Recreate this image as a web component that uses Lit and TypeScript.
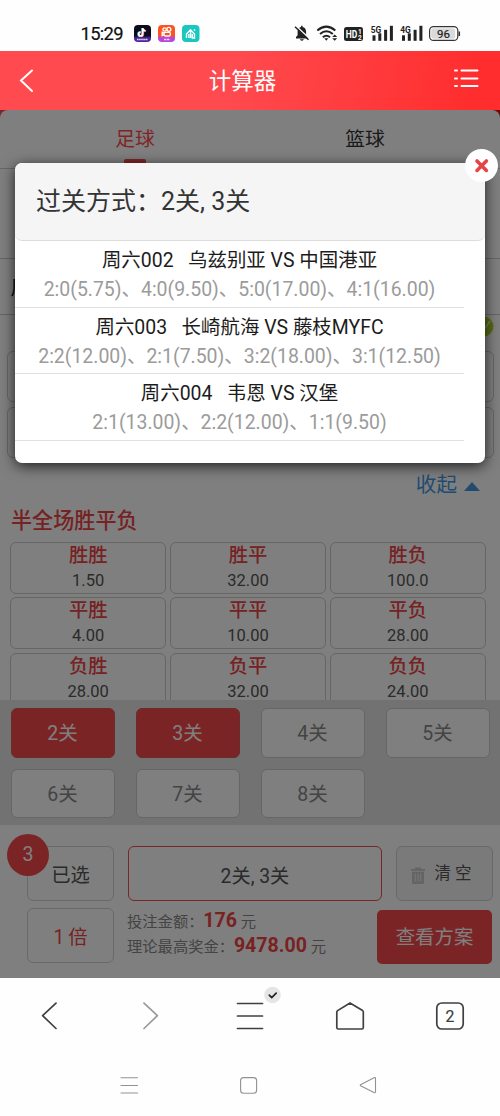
import { LitElement, html, css, svg } from "lit";
import { customElement } from "lit/decorators.js";
import { classMap } from "lit/directives/class-map.js";

const outcomes = [
  ["胜胜", "1.50"], ["胜平", "32.00"], ["胜负", "100.0"],
  ["平胜", "4.00"], ["平平", "10.00"], ["平负", "28.00"],
  ["负胜", "28.00"], ["负平", "32.00"], ["负负", "24.00"],
];
const passes = [2, 3, 4, 5, 6, 7, 8];
const matches = [
  ["周六002", "乌兹别亚 VS 中国港亚", "2:0(5.75)、4:0(9.50)、5:0(17.00)、4:1(16.00)"],
  ["周六003", "长崎航海 VS 藤枝MYFC", "2:2(12.00)、2:1(7.50)、3:2(18.00)、3:1(12.50)"],
  ["周六004", "韦恩 VS 汉堡", "2:1(13.00)、2:2(12.00)、1:1(9.50)"],
];

@customElement("phone-status")
class PhoneStatus extends LitElement {
  static styles = css`
    :host { display: block; height: 51px; background: #fefefe; }
    svg { display: block; }
    text { font-family: Roboto, sans-serif; }
  `;
  bars() {
    return svg`<rect x="0" y="9.5" width="3" height="5.5"/><rect x="5.8" y="7.5" width="3" height="7.5"/><rect x="11.6" y="4" width="3" height="11"/><rect x="17.4" y="0" width="3" height="15"/>`;
  }
  render() {
    return html`<svg width="500" height="51" viewBox="0 0 500 51">
      <defs>
        <linearGradient id="dy" x1="0" y1="0" x2="0" y2="1"><stop offset=".65" stop-color="#0c0c1c"/><stop offset=".75" stop-color="#4b2798"/></linearGradient>
        <linearGradient id="ks" x1="0" y1="0" x2="0" y2="1"><stop offset=".6" stop-color="#fb5420"/><stop offset=".78" stop-color="#b944e4"/></linearGradient>
      </defs>
      <text x="80.5" y="40.3" font-size="18.4" textLength="43" fill="#111" stroke="#111" stroke-width=".2">15:29</text>
      <rect x="134" y="25" width="17" height="17" rx="4" fill="url(#dy)"/>
      <g fill="none" stroke-width="1.7">
        <path d="M142.7 28v6a2 2 0 1 1-2-2M142.7 28.500q.5 2 2.800 2.300" stroke="#27e0e0" transform="translate(-.6 0)"/>
        <path d="M142.700 28v6a2 2 0 1 1-2-2M142.700 28.500q.5 2 2.800 2.300" stroke="#f33b60" transform="translate(.6 .3)"/>
        <path d="M142.700 28v6a2 2 0 1 1-2-2M142.700 28.500q.5 2 2.800 2.300" stroke="#fff"/>
      </g>
      <path d="M137 39.500h11" stroke="#e5d6ff" stroke-width="1.600" stroke-dasharray="1.600 .5"/>
      <rect x="158" y="25" width="17" height="17" rx="4" fill="url(#ks)"/>
      <g fill="none" stroke="#fff" stroke-width="1.300"><circle cx="164.600" cy="29.500" r="1.700"/><circle cx="168.900" cy="29.300" r="2"/><rect x="164" y="32.300" width="6.400" height="3.700" rx="1.400"/><path d="M164 33l-1.800-.8v3.400l1.800-.8"/></g>
      <path d="M164 39.500h6" stroke="#f4d7ff" stroke-width="1.600" stroke-dasharray="2.400 .6"/>
      <rect x="182" y="25" width="17.500" height="17" rx="4" fill="#19c7bf"/>
      <path d="M186.500 38v-4l4-4.300 4 4.300v4h-2.200v-4M188.900 38v-4M190.600 38v-7.500" fill="none" stroke="#fff" stroke-width="1.400"/>
      <circle cx="194.500" cy="30" r=".9" fill="#d5fffb"/>
      <g fill="#222">
        <path d="M296 38.500v-1.400l1.600-1.900v-3.600q.3-3.700 3.500-4.500v-1.300h1.500v1.300q3.200.8 3.500 4.500v3.600l1.600 1.900v1.400zM299.800 39.300h4.200q-2.100 3-4.200 0"/>
        <path d="M296 26l13.500 12.500" stroke="#fefefe" stroke-width="1.500"/>
        <path d="M295 26.800l13.500 13" stroke="#222" stroke-width="1.500"/>
        <g fill="none" stroke="#222" stroke-width="2"><path d="M317.300 30.500q9-7.800 18 0"/><path d="M320 34q6.400-5.500 12.800 0"/><path d="M322.800 37.300q3.600-3 7.200 0"/></g>
        <path d="M324.300 38.300h4l-2 2.400zM332.200 37h5l-2.500-2.600zM332.200 38.200h5l-2.500 2.600z"/>
        <rect x="344" y="27" width="19" height="14" rx="2.500"/>
        <text x="345.700" y="37.700" font-size="10" font-weight="700" fill="#fff" textLength="11.500" lengthAdjust="spacingAndGlyphs">HD</text>
        <text x="358" y="33.700" font-size="6.500" font-weight="700" fill="#fff">1</text>
        <text x="358" y="39.800" font-size="6.500" font-weight="700" fill="#fff">2</text>
        <g transform="translate(372.500 25.800)">${this.bars()}</g>
        <g transform="translate(402 25.800)">${this.bars()}</g>
        <rect x="370" y="25" width="11.500" height="8" fill="#fefefe"/><rect x="400" y="25" width="10.500" height="8" fill="#fefefe"/>
        <text x="370.700" y="32.500" font-size="9" font-weight="700" textLength="10.500" lengthAdjust="spacingAndGlyphs">5G</text>
        <text x="400.200" y="32.500" font-size="9" font-weight="700" textLength="10.500" lengthAdjust="spacingAndGlyphs">4G</text>
      </g>
      <rect x="429.600" y="26.600" width="28.200" height="13.800" rx="4" fill="#fff" stroke="#333" stroke-width="1.200"/>
      <rect x="431.200" y="28.200" width="24" height="10.600" rx="2.500" fill="#dadada"/>
      <path d="M459.300 31.500v4.500" stroke="#333" stroke-width="1.500"/>
      <text x="437" y="37.800" font-size="11.500" fill="#222" stroke="#222" stroke-width=".2">96</text>
    </svg>`;
  }
}

@customElement("pass-dialog")
class PassDialog extends LitElement {
  static styles = css`
    :host { display: block; background: #fff; border-radius: 7px; box-shadow: 0 3px 14px rgba(0,0,0,.75); color: #1c1c1c; }
    .head { height: 77px; background: #f5f5f5; border-bottom: 1px solid #ddd; border-radius: 7px; padding-left: 21px; font-size: 25px; line-height: 78px; color: #333; }
    .row { width: 449px; height: 66.67px; box-sizing: border-box; border-bottom: 1.5px solid #e0e0e0; padding-top: 5px; text-align: center; font-size: 19.450px; line-height: 29px; white-space: pre; }
    .odds { color: #9b9b9b; }
    .close { position: absolute; top: -14px; right: -13px; width: 33px; height: 33px; }
    .close svg { display: block; }
  `;
  render() {
    return html`
      <div class="head">过关方式：2关, 3关</div>
      ${matches.map(([no, teams, odds]) => html`<div class="row"><div>${no}   ${teams}</div><div class="odds">${odds}</div></div>`)}
      <div class="close"><svg width="33" height="33"><circle cx="16.500" cy="16.500" r="16.500" fill="#fff"/><path d="M12 12l9.400 9.400M21.400 12L12 21.400" stroke="#e64546" stroke-width="3.600" stroke-linecap="round"/></svg></div>`;
  }
}

@customElement("browser-bar")
class BrowserBar extends LitElement {
  static styles = css`
    :host { display: block; height: 138px; background: #fefefe; }
    svg { display: block; }
    text { font-family: Roboto, sans-serif; }
  `;
  render() {
    return html`<svg width="500" height="138" viewBox="0 978 500 138" fill="none" stroke="#404040" stroke-width="1.700" stroke-linecap="round" stroke-linejoin="round">
      <path d="M56 1003.200L42.600 1015.600L56 1028.500"/>
      <path d="M144 1003.200L157.400 1015.600L144 1028.500" stroke="#999"/>
      <path d="M237.500 1003.500H262.500M237.500 1016H262.500M237.500 1028.500H262.500"/>
      <circle cx="272.500" cy="995" r="8.300" fill="#e5e5e5" stroke="none"/>
      <path d="M269.300 995.200l2.400 2.400 4.500-4.500" stroke="#222"/>
      <path d="M336.800 1012.200q0-1 .8-1.600L350 1003l12.600 7.600q.7.500.7 1.500V1027.500q0 1.500-1.500 1.500H338.300q-1.500 0-1.500-1.500z"/>
      <rect x="436.800" y="1003" width="26.400" height="26" rx="5"/>
      <text x="445.400" y="1021.500" font-size="15.800" fill="#404040" stroke-width=".2">2</text>
      <g stroke="#929292" stroke-width="1.100">
        <path d="M121 1077.800h16.500M121 1085.500h16.500M121 1093h16.500"/>
        <rect x="240.600" y="1077.600" width="16" height="15.600" rx="3"/>
        <path d="M375.500 1078.500V1091.500q0 1.800-1.500 1L361 1086q-1.500-.8 0-1.600L374 1077.700q1.500-.8 1.500.8z"/>
      </g>
    </svg>`;
  }
}

@customElement("app-root")
class AppRoot extends LitElement {
  static styles = css`
    :host { display: block; position: relative; width: 500px; height: 1116px; overflow: hidden; background: #fefefe; font-family: Roboto, "Noto Sans CJK SC", sans-serif; color: #333; }
    .nav { height: 59px; box-sizing: border-box; background: linear-gradient(100deg, #ff4b50 45%, #ff2d2d 95%); display: flex; align-items: center; justify-content: space-between; padding: 0 21px 0 19px; color: #fff; font-size: 22.5px; }
    .nav span { line-height: 56px; padding-right: 2px; }
    .main { position: relative; height: 868px; background: linear-gradient(90deg, #ff4b50 50%, #d91414); overflow: hidden; display: flex; flex-direction: column; }
    .shade { position: absolute; inset: 0; background: rgba(0,0,0,.5); }
    .sheet { height: 590px; overflow: hidden; background: #fff; border-radius: 8px 8px 0 0; display: flex; flex-direction: column; flex: none; }
    .tabs { height: 58px; border-bottom: 1px solid #ccc; display: grid; grid-template-columns: 1fr 1fr; padding: 0 20px; font-size: 19.8px; line-height: 59px; text-align: center; flex: none; }
    .tab { height: 58px; display: flex; flex-direction: column; align-items: center; }
    .tab.on { color: #ff4a4c; }
    .tab i { width: 22px; height: 4px; border-radius: 2px 2px 0 0; background: #ff4a4c; margin-top: -10px; }
    .league { height: 89px; border-bottom: 1px solid #ccc; flex: none; }
    .match { height: 55px; border-bottom: 1px solid #ccc; padding-left: 10.500px; font-size: 19.800px; line-height: 60px; color: #111; flex: none; }
    .match span { display: block; width: 4.500px; height: 55px; overflow: hidden; white-space: nowrap; }
    .scores { display: grid; grid-template-rows: 51px 51px; gap: 4.500px; padding: 36px 6px 0 7px; flex: none; position: relative; }
    .scores div { border: 1px solid #ccc; border-radius: 6px; }
    .ball { position: absolute; right: 6px; top: 1px; display: block; }
    .fold { display: flex; align-items: center; justify-content: flex-end; gap: 7px; padding-right: 20px; height: 54px; font-size: 20.600px; color: #4598df; flex: none; }
    .fold span { line-height: 30px; }
    .fold svg { margin-top: 3px; }
    .title { font-size: 21.100px; line-height: 30px; height: 35px; margin-top: -6px; padding-left: 11px; color: #ec4547; font-weight: 500; flex: none; }
    .grid { display: grid; grid-template-columns: repeat(3, 1fr); grid-auto-rows: 52px; gap: 3.500px; padding: 1px 14px 0 10px; flex: none; }
    .cell { box-sizing: border-box; border: 1.500px solid #ccc; border-radius: 6px; text-align: center; font-size: 16.500px; line-height: 24px; color: #555; }
    .cell b { display: block; font-size: 19.300px; line-height: 26px; font-weight: 500; color: #ec4547; }
    .passes { height: 125px; box-sizing: border-box; background: #e4e4e4; display: grid; grid-template-columns: repeat(4, 104px); grid-auto-rows: 49.500px; column-gap: 21px; row-gap: 11px; padding: 8px 0 0 10.500px; flex: none; }
    .pass { box-sizing: border-box; border: 1px solid #ccc; border-radius: 6px; background: #fff; color: #888; font-size: 19.500px; text-align: center; line-height: 49px; }
    .pass.on { background: #f6494b; color: #fff; border-color: #d5585a; }
    .foot { flex: 1; background: #fff; padding: 21px 7px 14px 27px; display: grid; grid-template-columns: 87px 1fr 97px; column-gap: 14px; grid-template-rows: 55px 55px; row-gap: 7px; position: relative; }
    .box { box-sizing: border-box; border: 1px solid #d3d3d3; border-radius: 6px; text-align: center; font-size: 19.300px; line-height: 58px; color: #555; }
    .chosen { border: 1.500px solid #f34c4e; line-height: 59px; }
    .times { color: #ec4547; word-spacing: -1px; }
    .clear { display: flex; align-items: center; justify-content: center; gap: 9px; background: #f5f5f5; font-size: 16.500px; padding-right: 6px; word-spacing: 0; line-height: 52px; }
    .clear svg { margin-top: 4px; }
    .last { grid-column: 2 / 4; display: flex; justify-content: space-between; padding-right: 1px; }
    .money { font-size: 15.300px; line-height: 24px; color: #888; white-space: nowrap; margin-left: -1px; padding-top: 1px; }
    .money b { font-size: 19.600px; color: #f04547; font-weight: 700; margin-left: -4px; }
    .view { width: 115px; height: 54px; margin-top: 1.500px; border-radius: 5px; background: #f6494b; color: #fff; font-size: 19.400px; line-height: 55px; text-align: center; }
    .count { position: absolute; left: 7px; top: 9px; width: 42px; height: 42px; border-radius: 50%; background: #f6494b; color: #fff; font-size: 19.500px; line-height: 41px; text-align: center; }
    pass-dialog { position: absolute; left: 15px; top: 163px; width: 470px; height: 300px; }
  `;
  render() {
    return html`
      <phone-status></phone-status>
      <div class="nav">
        <svg width="15" height="24" fill="none" stroke="#fff" stroke-width="2" stroke-linecap="round"><path d="M13 1.500L2 11.500l11 10.500"/></svg>
        <span>计算器</span>
        <svg width="26" height="23" fill="none" stroke="#fff" stroke-width="2" stroke-linecap="round"><path d="M2 1.500h2M8.500 1.500h16M2 9.500h2M8.500 9.500h16M2 17h2M8.500 17h16"/></svg>
      </div>
      <div class="main">
        <div class="sheet">
          <div class="tabs"><div class="tab on">足球<i></i></div><div class="tab">篮球</div></div>
          <div class="league"></div>
          <div class="match"><span>周</span></div>
          <div class="scores"><div></div><div></div>
            <svg class="ball" width="21" height="21"><circle cx="10.500" cy="10.500" r="10" fill="#b2d625"/><path d="M5 17Q12 14 17 5" stroke="#fff" stroke-width="1.500" fill="none"/></svg>
          </div>
          <div class="fold"><span>收起</span><svg width="16" height="9"><path d="M0 9L8 0l8 9z" fill="#4598df"/></svg></div>
          <div class="title">半全场胜平负</div>
          <div class="grid">${outcomes.map(([name, odd]) => html`<div class="cell"><b>${name}</b>${odd}</div>`)}</div>
        </div>
        <div class="passes">${passes.map((n) => html`<div class=${classMap({ pass: true, on: n < 4 })}>${n}关</div>`)}</div>
        <div class="foot">
          <div class="box">已选</div>
          <div class="box chosen">2关, 3关</div>
          <div class="box clear"><svg width="14" height="17"><path d="M4 2V.5h6V2h4v1.800H0V2zM1 4.800h12V15.500q0 1.500-1.500 1.500h-9Q1 17 1 15.500z" fill="#c8c8c8"/><path d="M4.200 6.500v8M7 6.500v8M9.800 6.500v8" stroke="#f5f5f5" stroke-width="1"/></svg><span>清 空</span></div>
          <div class="box times">1 倍</div>
          <div class="last">
            <div class="money"><div>投注金额： <b>176</b> 元</div><div>理论最高奖金： <b>9478.00</b> 元</div></div>
            <div class="view">查看方案</div>
          </div>
          <div class="count">3</div>
        </div>
        <div class="shade"></div>
      </div>
      <browser-bar></browser-bar>
      <pass-dialog></pass-dialog>`;
  }
}
